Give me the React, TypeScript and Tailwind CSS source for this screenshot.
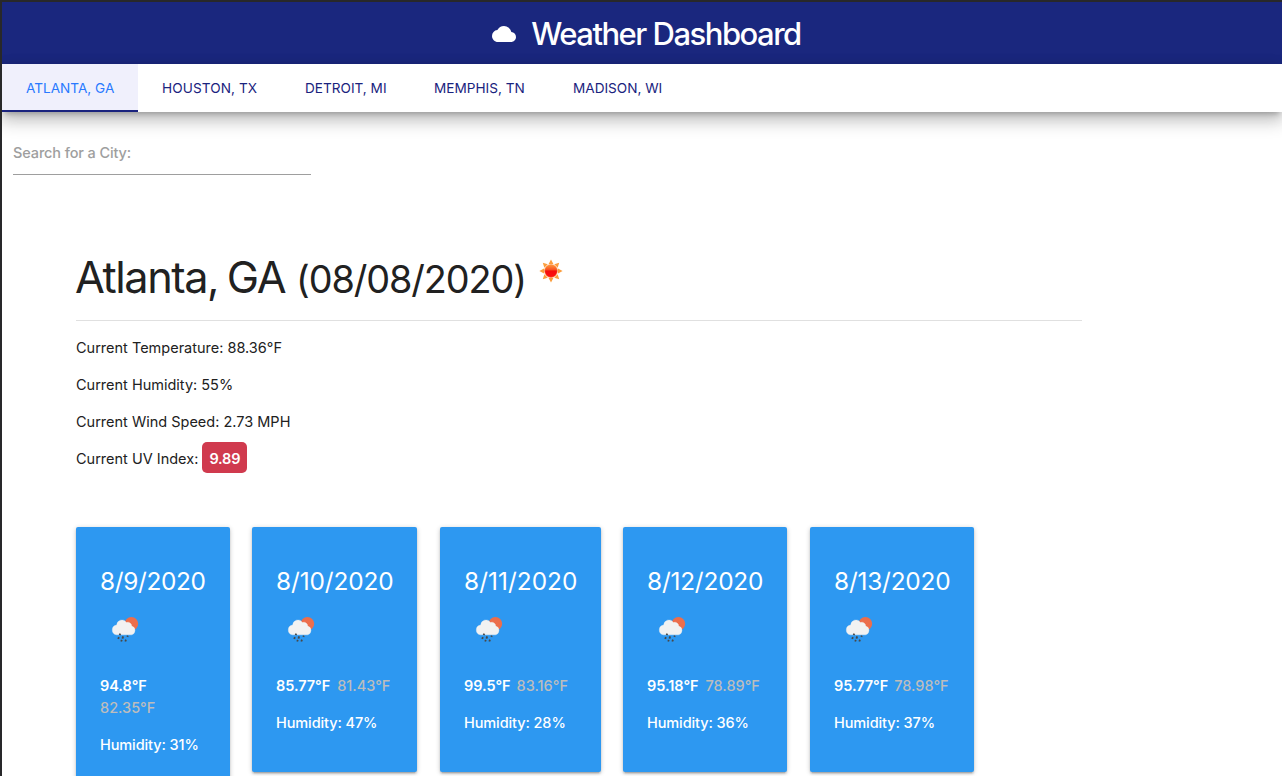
type City = { name: string; cls: string };

const cities: City[] = [
  { name: "HOUSTON, TX", cls: "w-[143px] tracking-[0.1px]" },
  { name: "DETROIT, MI", cls: "w-[129px]" },
  { name: "MEMPHIS, TN", cls: "w-[139px]" },
  { name: "MADISON, WI", cls: "w-[137px]" },
];

const days = [
  { date: "8/9/2020", high: "94.8°F", low: "82.35°F", humidity: "31%", box: "w-[154px] h-[267px] mr-[22px]", dateCls: "tracking-[-0.35px]", tempCls: "flex-col" },
  { date: "8/10/2020", high: "85.77°F", low: "81.43°F", humidity: "47%", box: "w-[165px] h-[245px] mr-[23px]", dateCls: "tracking-[-0.1px]", tempCls: "gap-[7px]" },
  { date: "8/11/2020", high: "99.5°F", low: "83.16°F", humidity: "28%", box: "w-[161px] h-[245px] mr-[22px]", dateCls: "tracking-[0.05px]", tempCls: "gap-[6px]" },
  { date: "8/12/2020", high: "95.18°F", low: "78.89°F", humidity: "36%", box: "w-[164px] h-[245px] mr-[23px]", dateCls: "tracking-[-0.2px]", tempCls: "gap-[7px]" },
  { date: "8/13/2020", high: "95.77°F", low: "78.98°F", humidity: "37%", box: "w-[164px] h-[245px]", dateCls: "tracking-[-0.2px]", tempCls: "gap-[6px]" },
];

function SunIcon() {
  return (
    <svg className="mt-[13px] ml-[13px] size-[28px] shrink-0" viewBox="0 0 28 28">
      <defs>
        <linearGradient id="sun" x1="0" y1="0" x2="0" y2="1">
          <stop offset="0" stopColor="#ff9a3c" />
          <stop offset="0.4" stopColor="#f8501f" />
          <stop offset="0.5" stopColor="#f40d0d" />
          <stop offset="1" stopColor="#ff1010" />
        </linearGradient>
      </defs>
      {[0, 45, 90, 135, 180, 225, 270, 315].map((a) => (
        <path key={a} d="M14 2.4 L16.4 7 H11.6 Z" fill="#fb9d3c" transform={`rotate(${a} 14 14)`} />
      ))}
      <circle cx="14" cy="14" r="6.4" fill="url(#sun)" stroke="#fb8a35" strokeWidth="0.6" />
    </svg>
  );
}

function RainIcon() {
  return (
    <svg className="block size-[50px]" viewBox="0 0 50 50">
      <circle cx="31.4" cy="18.8" r="6.8" fill="#ec6e4c" />
      <path
        d="M16.4 29.8 a4.9 4.9 0 0 1 .3 -9.7 a5.3 5.3 0 0 1 9.8 -2.6 a3.9 3.9 0 0 1 5.2 3.6 a4.5 4.5 0 0 1 -.2 8.7 Z"
        fill="#f2f2f2"
        stroke="#f2f2f2"
        strokeWidth="0.4"
      />
      <path
        d="M20.3 28.6 l-.7 1.6 M27.8 30.6 l-.5 1.2 M18.9 32.2 l-.7 1.8 M23.2 31.4 l-.8 2.2 M21.8 34.9 l-.6 1.6 M26 34.6 l-.7 1.9"
        stroke="#484848"
        strokeWidth="1.8"
      />
    </svg>
  );
}

export default function App() {
  return (
    <div className="h-[776px] w-[1282px] overflow-hidden border-t-2 border-l-2 border-[#28282a] bg-white font-[Inter,sans-serif] text-[14.5px] leading-[22px] text-[#212121]">
      <header className="flex h-[62px] items-center justify-center bg-[#1a277e] pt-[2px] text-white">
        <svg className="mr-[15px] ml-[9px] h-[24px] w-[24px]" viewBox="0 0 24 24" fill="currentColor">
          <path d="M19.35 10.04A7.49 7.49 0 0 0 12 4C9.11 4 6.6 5.64 5.35 8.04A5.994 5.994 0 0 0 0 14c0 3.31 2.69 6 6 6h13c2.76 0 5-2.24 5-5 0-2.64-2.05-4.78-4.65-4.96z" />
        </svg>
        <h1 className="text-[31px] leading-[60px] font-medium tracking-[-1.5px]">Weather Dashboard</h1>
      </header>

      <nav className="flex h-[48px] bg-white text-[13.6px] leading-[48px] text-[#1a237e] shadow-[0_8px_17px_2px_rgba(0,0,0,0.2),0_5px_5px_-3px_rgba(0,0,0,0.2),0_3px_14px_0_rgba(0,0,0,0.1)]">
        <a className="w-[136px] border-b-2 border-[#1a237e] bg-[#f0f0fc] pl-[24px] text-[#2979ff]">ATLANTA, GA</a>
        {cities.map((c) => (
          <a key={c.name} className={`${c.cls} pl-[24px]`}>{c.name}</a>
        ))}
      </nav>

      <div className="mt-[18px] ml-[11px] h-[45px] w-[298px] border-b border-[#9e9e9e] leading-[45px] font-medium tracking-[-0.12px] text-[#9e9e9e]">
        Search for a City:
      </div>

      <main className="ml-[74px]">
        <div className="mt-[69px] flex h-[77px] w-[1006px] items-start border-b border-[#e0e0e0]">
          <h2 className="-ml-px w-[209px] text-[43.3px] leading-[66px] tracking-[-1.45px] whitespace-nowrap [word-spacing:-2px]">Atlanta, GA</h2>
          <span className="ml-[12px] w-[228px] text-[37.8px] leading-[70px] tracking-[-1.1px] whitespace-nowrap">(08/08/2020)</span>
          <SunIcon />
        </div>
        <div className="mt-[16px] flex flex-col gap-[15px]">
          <p>Current Temperature: 88.36°F</p>
          <p>Current Humidity: 55%</p>
          <p>Current Wind Speed: 2.73 MPH</p>
          <p className="flex items-center">
            Current UV Index:
            <span className="-mt-[7px] -mb-[3px] ml-[4px] h-[31px] w-[45px] rounded-[5px] bg-[#d03a4e] text-center leading-[33px] font-semibold tracking-[-0.2px] text-white">9.89</span>
          </p>
        </div>
        <div className="mt-[57px] flex items-start font-medium text-white">
          {days.map((d) => (
            <section
              key={d.date}
              className={`${d.box} shrink-0 rounded-[2px] bg-[#2d98f1] px-[24px] pt-[38px] shadow-[0_2px_2px_0_rgba(0,0,0,0.14),0_3px_1px_-2px_rgba(0,0,0,0.12),0_1px_5px_0_rgba(0,0,0,0.2)]`}
            >
              <h3 className={`${d.dateCls} text-[24.4px] leading-[32px] font-normal whitespace-nowrap`}>{d.date}</h3>
              <div className="mt-[8px]"><RainIcon /></div>
              <p className={`mt-[20px] flex ${d.tempCls}`}>
                <span className="font-semibold tracking-[-0.05px]">{d.high}</span>
                <span className="text-[#bdbdbd]">{d.low}</span>
              </p>
              <p className="mt-[15px] tracking-[-0.1px] whitespace-nowrap">Humidity: {d.humidity}</p>
            </section>
          ))}
        </div>
      </main>
    </div>
  );
}
